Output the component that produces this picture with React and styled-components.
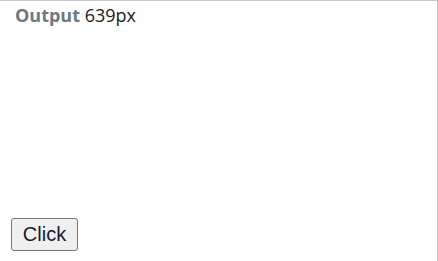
import styled, { createGlobalStyle } from 'styled-components';

const GlobalStyle = createGlobalStyle`
  html, body {
    margin: 0;
    padding: 0;
    background: #fff;
  }
`;

const Frame = styled.div`
  box-sizing: border-box;
  width: 438px;
  height: 261px;
  border-top: 1px solid #c8c8c8;
  border-right: 1px solid #c8c8c8;
  display: flex;
  flex-direction: column;
  justify-content: space-between;
  padding: 2px 0 10px 11px;
`;

const Readout = styled.div`
  font-family: "Open Sans", sans-serif;
  font-size: 18px;
  line-height: 24px;
  color: #222;
  padding-left: 4px;
`;

const Label = styled.span`
  font-weight: 700;
  color: #6c7a80;
`;

const Button = styled.button`
  align-self: flex-start;
  width: 67px;
  height: 33px;
  font-family: "Liberation Sans", Arial, sans-serif;
  font-size: 20px;
  color: #1a1a2e;
  background: #efefef;
  border: 1px solid #767676;
  border-radius: 3px;
  padding: 0;
`;

export default function App() {
  return (
    <>
      <GlobalStyle />
      <Frame>
        <Readout>
          <Label>Output</Label> 639px
        </Readout>
        <Button>Click</Button>
      </Frame>
    </>
  );
}
